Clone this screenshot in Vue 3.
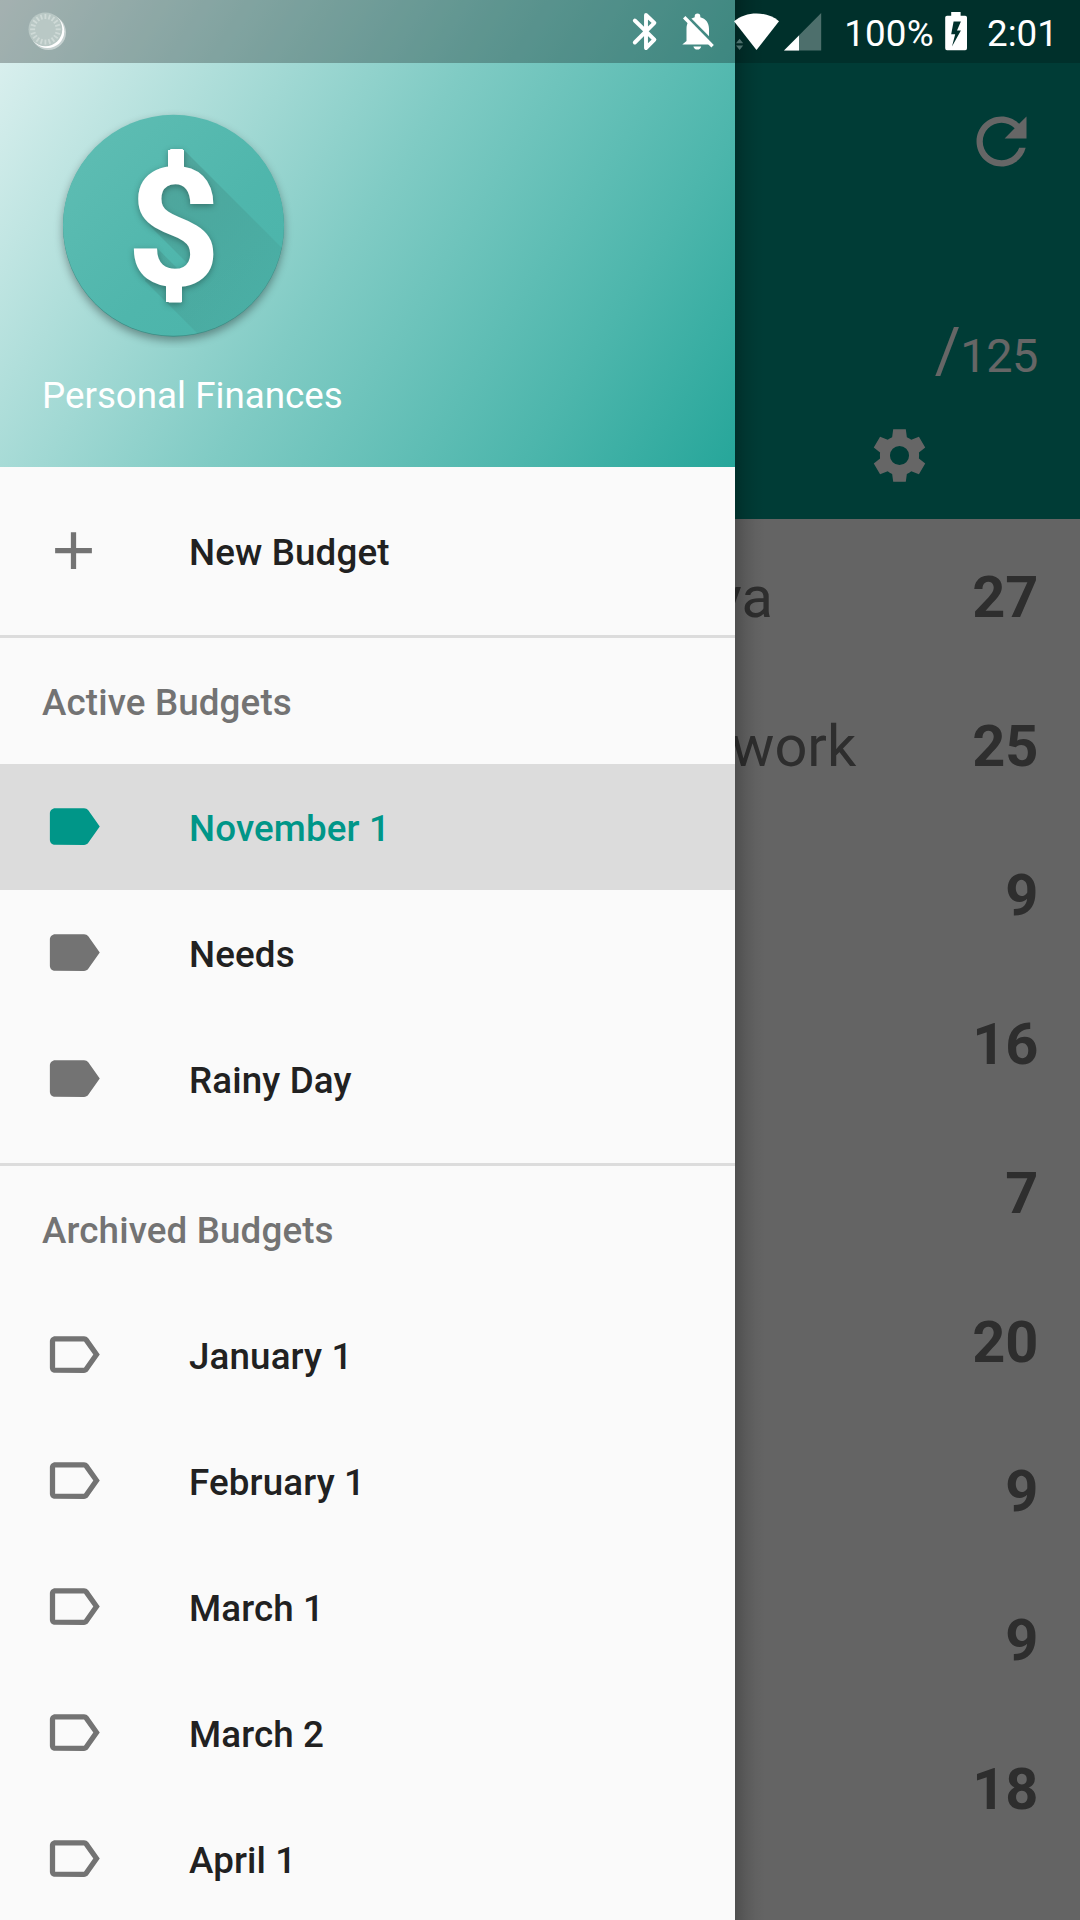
<script setup>
const entries = [
  { name: 'va', amount: 27, start: 714 },
  { name: 'work', amount: 25, start: 731 },
  { name: '', amount: 9, start: 0 },
  { name: '', amount: 16, start: 0 },
  { name: '', amount: 7, start: 0 },
  { name: '', amount: 20, start: 0 },
  { name: '', amount: 9, start: 0 },
  { name: '', amount: 9, start: 0 },
  { name: '', amount: 18, start: 0 },
]

const activeBudgets = [
  { name: 'November 1', selected: true },
  { name: 'Needs', selected: false },
  { name: 'Rainy Day', selected: false },
]

const archivedBudgets = ['January 1', 'February 1', 'March 1', 'March 2', 'April 1']

const ticks = Array.from({ length: 20 }, (_, i) => i * 18)
</script>

<template>
  <div class="screen">
    <main class="page">
      <header class="toolbar">
        <svg class="refresh" viewBox="0 0 24 24">
          <path d="M17.65 6.35C16.2 4.9 14.21 4 12 4c-4.42 0-7.99 3.58-7.99 8s3.57 8 7.99 8c3.73 0 6.84-2.55 7.73-6h-2.08c-.82 2.33-3.04 4-5.65 4-3.31 0-6-2.69-6-6s2.69-6 6-6c1.66 0 3.14.69 4.22 1.78L13 11h7V4l-2.35 2.35z" />
        </svg>
        <div class="total"><span class="slash">/</span><span>125</span></div>
        <svg class="settings" viewBox="0 0 24 24">
          <path fill-rule="evenodd" d="M9.6 2H14.4L14.8 5Q15.8 5.4 16.5 6L19.4 4.85L21.8 8.95L19.4 10.9Q19.55 12 19.4 13.1L21.8 15.05L19.4 19.15L16.5 18Q15.8 18.6 14.8 19L14.4 22H9.6L9.2 19Q8.2 18.6 7.5 18L4.6 19.15L2.2 15.05L4.6 13.1Q4.45 12 4.6 10.9L2.2 8.95L4.6 4.85L7.5 6Q8.2 5.4 9.2 5zM12 8.35a3.65 3.65 0 1 0 0 7.3a3.65 3.65 0 1 0 0-7.3z" />
        </svg>
      </header>
      <ul class="entries">
        <li v-for="(entry, i) in entries" :key="i" class="entry">
          <span class="entry-name" :style="{ paddingLeft: entry.start + 'px' }">{{ entry.name }}</span>
          <span class="entry-amount">{{ entry.amount }}</span>
        </li>
      </ul>
    </main>
    <div class="scrim"></div>
    <div class="drawer-shadow"></div>

    <aside class="drawer">
      <div class="drawer-header">
        <div class="status-shade"></div>
        <svg class="logo" viewBox="52 105 243 243">
          <defs>
            <linearGradient id="disc" x1="0" y1="0" x2="1" y2="1">
              <stop offset="0" stop-color="#61beb4" />
              <stop offset="0.6" stop-color="#4fb6ac" />
              <stop offset="1" stop-color="#4ab4aa" />
            </linearGradient>
            <linearGradient id="cast" x1="0" y1="0" x2="1" y2="1">
              <stop offset="0" stop-color="#3c6b64" stop-opacity="0.3" />
              <stop offset="1" stop-color="#3c7f76" stop-opacity="0.06" />
            </linearGradient>
            <clipPath id="disc-clip"><circle cx="173.5" cy="225.5" r="110.7" /></clipPath>
          </defs>
          <g class="disc">
            <circle cx="173.5" cy="226.2" r="110.5" fill="#3b8f86" />
            <circle cx="173.5" cy="225.3" r="110.5" fill="url(#disc)" />
          </g>
          <path clip-path="url(#disc-clip)" fill="url(#cast)" d="M184 150L290 256V340H204L166 302L145 281L150 262L157 248L190 281L200 276L150 226L145 200L160 180L168 165z" />
          <g class="dollar">
            <rect x="168" y="150" width="16" height="22" />
            <rect x="166" y="280" width="16" height="22" />
            <text x="173.6" y="284.9" text-anchor="middle">$</text>
          </g>
        </svg>
        <div class="app-name">Personal Finances</div>
      </div>

      <nav class="menu">
        <div class="item">
          <svg class="icon" viewBox="0 0 24 24"><path d="M19 13h-6v6h-2v-6H5v-2h6V5h2v6h6v2z" /></svg>
          <span class="label">New Budget</span>
        </div>
        <div class="divider"></div>
        <div class="item heading"><span class="label">Active Budgets</span></div>
        <div v-for="b in activeBudgets" :key="b.name" class="item" :class="{ selected: b.selected }">
          <svg class="icon" viewBox="0 0 24 24"><path d="M17.63 5.84C17.27 5.33 16.67 5 16 5L5 5.01C3.9 5.01 3 5.9 3 7v10c0 1.1.9 1.99 2 1.99L16 19c.67 0 1.27-.33 1.63-.84L22 12l-4.37-6.16z" /></svg>
          <span class="label">{{ b.name }}</span>
        </div>
        <div class="divider"></div>
        <div class="item heading"><span class="label">Archived Budgets</span></div>
        <div v-for="name in archivedBudgets" :key="name" class="item">
          <svg class="icon" viewBox="0 0 24 24"><path d="M17.63 5.84C17.27 5.33 16.67 5 16 5L5 5.01C3.9 5.01 3 5.9 3 7v10c0 1.1.9 1.99 2 1.99L16 19c.67 0 1.27-.33 1.63-.84L22 12l-4.37-6.16zM16 17H5V7h11l3.55 5L16 17z" /></svg>
          <span class="label">{{ name }}</span>
        </div>
      </nav>
    </aside>

    <div class="status-bar">
      <svg width="60" height="63" viewBox="20 0 60 63">
        <circle cx="48.4" cy="32.4" r="17.6" fill="#fff" fill-opacity="0.45" />
        <circle cx="47.4" cy="31.2" r="16.9" fill="#fff" />
        <circle cx="45.4" cy="29.3" r="16.9" fill="#b9c8c5" />
        <path v-for="t in ticks" :key="t" d="M45.4 14v5" :transform="`rotate(${t} 45.4 29.3)`" stroke="#cfdad7" stroke-width="1.8" />
      </svg>
      <span class="gap"></span>
      <svg width="50" height="63" viewBox="620 0 50 63">
        <path d="M634.8 20.5L654.4 39.6L646 48V15L654.4 22.9L634.8 42.5" fill="none" stroke="#fff" stroke-width="3.9" stroke-linecap="round" stroke-linejoin="round" />
      </svg>
      <svg width="55" height="63" viewBox="670 0 55 63">
        <defs>
          <mask id="bell-cut">
            <rect x="670" y="0" width="55" height="63" fill="#fff" />
            <path d="M682 12L719 49" stroke="#000" stroke-width="4" />
          </mask>
        </defs>
        <g fill="#fff" mask="url(#bell-cut)">
          <path d="M686.5 41V29C686.5 23 689.5 18.6 694.7 17.3V16.2a2.8 2.8 0 0 1 5.6 0V17.3C705.8 18.6 709 23 709 29V40.5L712 44.4H682.3z" />
        </g>
        <path d="M693.4 46.4H701.2A4 4 0 0 1 693.4 46.4z" fill="#fff" />
        <path d="M684.2 17.2L712.6 46.3" stroke="#fff" stroke-width="3.4" />
      </svg>
      <svg width="55" height="63" viewBox="725 0 55 63">
        <path d="M734 21.2C740.5 16 748 13.5 756.5 13.5S772.5 16 779 21.2L756.5 50z" fill="#fff" />
        <path d="M736 43.3L739.6 38.7L743.2 43.3zM736 45.6H743.2L739.6 50z" fill="#4d706d" />
      </svg>
      <svg width="45" height="63" viewBox="780 0 45 63">
        <path d="M821.2 13V50.6H784z" fill="#4d6f6c" />
        <path d="M799 35.5V50.6H784z" fill="#fff" />
      </svg>
      <span class="percent">100%</span>
      <svg class="battery" width="44" height="63" viewBox="936 0 44 63">
        <path fill="#fff" fill-rule="evenodd" d="M951.2 12H960.6V15.8H965.2Q967 15.8 967 17.6V48.3Q967 50.2 965.2 50.2H947Q945.2 50.2 945.2 48.3V17.6Q945.2 15.8 947 15.8H951.2zM953.6 21.5L951.2 34.3H955.2L952 46.6L960.9 30.6H957L960.9 21.5z" />
      </svg>
      <span class="clock">2:01</span>
    </div>
  </div>
</template>

<style>
body {
  margin: 0;
}
</style>

<style scoped>
.screen {
  position: relative;
  width: 1080px;
  height: 1920px;
  overflow: hidden;
  background: #fafafa;
  font-family: Roboto, 'Liberation Sans', sans-serif;
  color: #212121;
}
svg {
  display: block;
  flex: none;
}
.page {
  display: flex;
  flex-direction: column;
  height: 100%;
}
.toolbar {
  box-sizing: border-box;
  height: 519px;
  padding: 104px 42px 0 0;
  background: #009688;
  display: flex;
  flex-direction: column;
  align-items: flex-end;
  box-shadow: inset 0 63px #00796b;
}
.toolbar svg {
  fill: #fff;
}
.refresh {
  width: 75px;
  height: 75px;
  margin-right: -1px;
}
.total {
  display: flex;
  align-items: baseline;
  margin-top: 135px;
  height: 74px;
  font-size: 46.8px;
  letter-spacing: -0.4px;
  line-height: 74px;
  color: #fff;
}
.slash {
  font-size: 63px;
}
.settings {
  width: 63px;
  height: 63px;
  margin: 36px 107px 0 0;
}
.entries {
  list-style: none;
  margin: 0;
  padding: 3px 41.5px 0 0;
  color: #737373;
}
.entry {
  display: flex;
  align-items: center;
  justify-content: space-between;
  height: 149px;
  font-size: 57.75px;
  line-height: 68px;
}
.entry-amount {
  font-weight: 700;
}
.scrim {
  position: absolute;
  inset: 0;
  background: rgba(0, 0, 0, 0.6);
}
.drawer-shadow {
  position: absolute;
  left: 735px;
  top: 0;
  width: 30px;
  height: 1920px;
  background: linear-gradient(90deg, rgba(0, 0, 0, 0.22), rgba(0, 0, 0, 0.1) 36%, rgba(0, 0, 0, 0.03) 70%, transparent);
}
.drawer {
  position: absolute;
  left: 0;
  top: 0;
  width: 735px;
  height: 1920px;
  overflow: hidden;
  background: #fafafa;
}
.drawer-header {
  display: flex;
  flex-direction: column;
  height: 467px;
  background: linear-gradient(122.43deg, #e0f2f1 0%, #80cbc4 49%, #4db6ac 79%, #26a69a 100%);
}
.status-shade {
  height: 63px;
  background: rgba(0, 0, 0, 0.267);
}
.logo {
  width: 243px;
  height: 243px;
  margin: 42px 0 0 52px;
}
.disc {
  filter: drop-shadow(0 4px 4px rgba(0, 0, 0, 0.35));
}
.dollar {
  font: 700 164.6px Roboto, sans-serif;
  fill: #fff;
  filter: drop-shadow(0 2px 3px rgba(0, 0, 0, 0.3));
}
.app-name {
  margin: 25px 0 0 42px;
  font-size: 36.75px;
  line-height: 46px;
  color: #fff;
}
.menu {
  padding-top: 21px;
}
.item {
  display: flex;
  box-sizing: border-box;
  height: 126px;
  padding: 31px 42px 0;
  font-size: 36.75px;
  line-height: 67px;
  font-weight: 500;
  letter-spacing: 0.13px;
}
.icon {
  width: 63px;
  height: 63px;
  margin-right: 84px;
  fill: #737373;
}
.heading {
  color: #737373;
}
.selected {
  background: #dcdcdc;
  color: #009688;
}
.selected .icon {
  fill: #009688;
}
.divider {
  height: 3px;
  margin-top: 21px;
  background: #dcdcdc;
}
.status-bar {
  position: absolute;
  left: 0;
  top: 0;
  width: 1080px;
  height: 63px;
  box-sizing: border-box;
  padding: 0 20px;
  display: flex;
  color: #fff;
  font-size: 36.75px;
  line-height: 67px;
}
.gap {
  width: 540px;
}
.percent {
  width: 94px;
  margin-left: 17px;
  text-align: center;
  white-space: nowrap;
  letter-spacing: 0.2px;
}
.clock {
  margin-left: 7px;
  white-space: nowrap;
}
</style>
